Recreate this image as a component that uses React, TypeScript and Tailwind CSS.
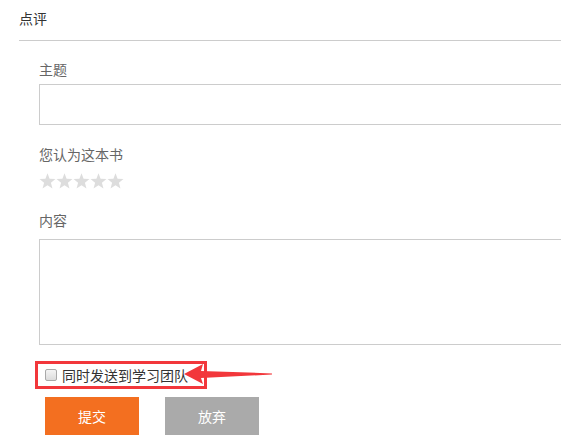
import React from "react";

function Star() {
  return (
    <svg width="17" height="16" viewBox="0 0 24 23" className="block">
      <polygon
        points="12,0.5 15,8.3 23.5,8.8 16.9,14.1 19.1,22.3 12,17.7 4.9,22.3 7.1,14.1 0.5,8.8 9,8.3"
        fill="#dddddd"
      />
    </svg>
  );
}

export default function App() {
  const font = { fontFamily: '"Microsoft YaHei", "Noto Sans CJK SC", "Noto Sans", sans-serif' };
  return (
    <div className="w-full h-[443px] overflow-hidden bg-white" style={font}>
      <div className="w-[800px]">
        <div className="ml-[19px] h-[41px] border-b border-[#cccccc] pt-[8px] text-[14px] leading-[20px] text-[#333333]">
          点评
        </div>
        <div className="ml-[39px]">
          <div className="mt-[18px] text-[14px] leading-[20px] text-[#666666]">主题</div>
          <div className="mt-[5px] h-[41px] border border-[#cccccc] bg-white" />
          <div className="mt-[19px] text-[14px] leading-[20px] text-[#666666]">您认为这本书</div>
          <div className="mt-[9px] flex h-[16px] gap-0">
            <Star />
            <Star />
            <Star />
            <Star />
            <Star />
          </div>
          <div className="mt-[21px] text-[14px] leading-[20px] text-[#666666]">内容</div>
          <div className="mt-[9px] h-[106px] border border-[#cccccc] bg-white" />
          <div className="relative mt-[16px] ml-[-4px] h-[28px]">
            <div className="flex h-[28px] w-[172px] items-center border-[3px] border-[#f2373b] pl-[7px]">
              <span className="block h-[12px] w-[12px] rounded-[2px] border border-[#a9a9a9] bg-gradient-to-b from-[#f4f4f4] to-[#dcdcdc]" />
              <span className="ml-[5px] text-[14px] leading-[20px] text-[#333333]">同时发送到学习团队</span>
            </div>
            <svg
              className="absolute left-[145px] top-0"
              width="100"
              height="28"
              viewBox="0 0 100 28"
            >
              <polygon
                points="4,13 23,3 21,10 92,12.4 92,13.6 21,17 23,23"
                fill="#f2373b"
              />
            </svg>
          </div>
          <div className="mt-[8px] ml-[6px] flex gap-[26px]">
            <button className="h-[38px] w-[94px] bg-[#f36f20] text-[14px] text-white">提交</button>
            <button className="h-[38px] w-[94px] bg-[#aaaaaa] text-[14px] text-white">放弃</button>
          </div>
        </div>
      </div>
    </div>
  );
}
